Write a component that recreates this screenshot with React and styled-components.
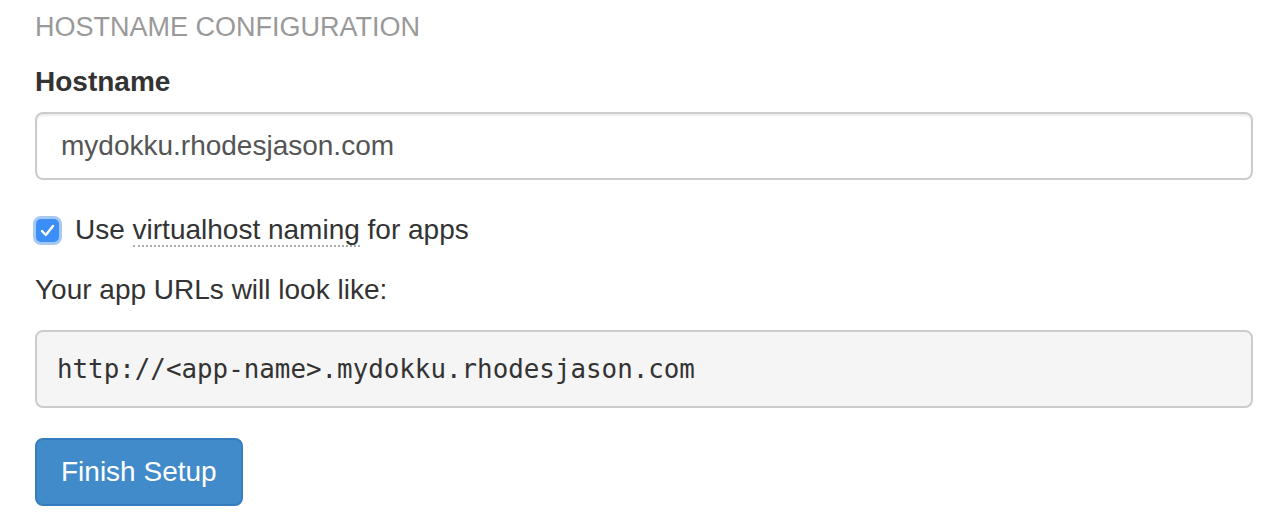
import React from "react";
import styled, { createGlobalStyle } from "styled-components";

const GlobalStyle = createGlobalStyle`
  body {
    margin: 0;
    background: #fff;
    font-family: "Liberation Sans", Arial, sans-serif;
    color: #333;
  }
`;

const Page = styled.form`
  width: 1218px;
  padding: 12px 0 0 35px;
  display: flex;
  flex-direction: column;
  font-size: 28px;
  line-height: 40px;
`;

const SectionTitle = styled.h4`
  margin: 0 0 20px;
  font-size: 27px;
  line-height: 30px;
  font-weight: 400;
  color: #999;
  text-transform: uppercase;
`;

const Label = styled.label`
  display: block;
  margin: 0 0 10px;
  font-weight: 700;
`;

const TextInput = styled.input`
  box-sizing: border-box;
  width: 100%;
  height: 68px;
  padding: 12px 24px;
  border: 2px solid #ccc;
  border-radius: 8px;
  box-shadow: inset 0 2px 2px rgba(0, 0, 0, 0.075);
  font: inherit;
  color: #555;
  background: #fff;
  outline: none;
`;

const CheckRow = styled.label`
  display: flex;
  align-items: center;
  gap: 16px;
  margin-top: 30px;
  cursor: pointer;
`;

const CheckBox = styled.span`
  box-sizing: border-box;
  width: 23px;
  height: 23px;
  margin-left: 1px;
  border-radius: 5px;
  background: #3b8ef5;
  box-shadow: 0 0 0 3px #a6c8f6;
  display: flex;
  align-items: center;
  justify-content: center;
`;

const Abbr = styled.abbr`
  text-decoration: none;
  border-bottom: 2px dotted #aaa;
  line-height: 30px;
`;

const Help = styled.p`
  margin: 20px 0 20px;
`;

const Pre = styled.pre`
  box-sizing: border-box;
  margin: 0;
  padding: 18px 20px;
  border: 2px solid #ccc;
  border-radius: 8px;
  background: #f5f5f5;
  font-family: "DejaVu Sans Mono", "Liberation Mono", monospace;
  font-size: 25.85px;
  line-height: 38px;
  color: #333;
`;

const Actions = styled.div`
  margin-top: 30px;
`;

const Button = styled.button`
  height: 68px;
  padding: 12px 24px;
  border: 2px solid #357ebd;
  border-radius: 8px;
  background: #428bca;
  color: #fff;
  font: inherit;
  cursor: pointer;
`;

export default function App() {
  return (
    <>
      <GlobalStyle />
      <Page onSubmit={(e) => e.preventDefault()}>
        <SectionTitle>Hostname Configuration</SectionTitle>
        <Label htmlFor="hostname">Hostname</Label>
        <TextInput id="hostname" defaultValue="mydokku.rhodesjason.com" />
        <CheckRow>
          <CheckBox>
            <svg width="15" height="13" viewBox="0 0 15 13">
              <path d="M2 7 L5.8 11 L13 2" fill="none" stroke="#fff" strokeWidth="2.4" strokeLinecap="round" strokeLinejoin="round" />
            </svg>
          </CheckBox>
          <span>
            Use <Abbr title="virtualhost">virtualhost naming</Abbr> for apps
          </span>
        </CheckRow>
        <Help>Your app URLs will look like:</Help>
        <Pre>http://&lt;app-name&gt;.mydokku.rhodesjason.com</Pre>
        <Actions>
          <Button type="submit">Finish Setup</Button>
        </Actions>
      </Page>
    </>
  );
}
